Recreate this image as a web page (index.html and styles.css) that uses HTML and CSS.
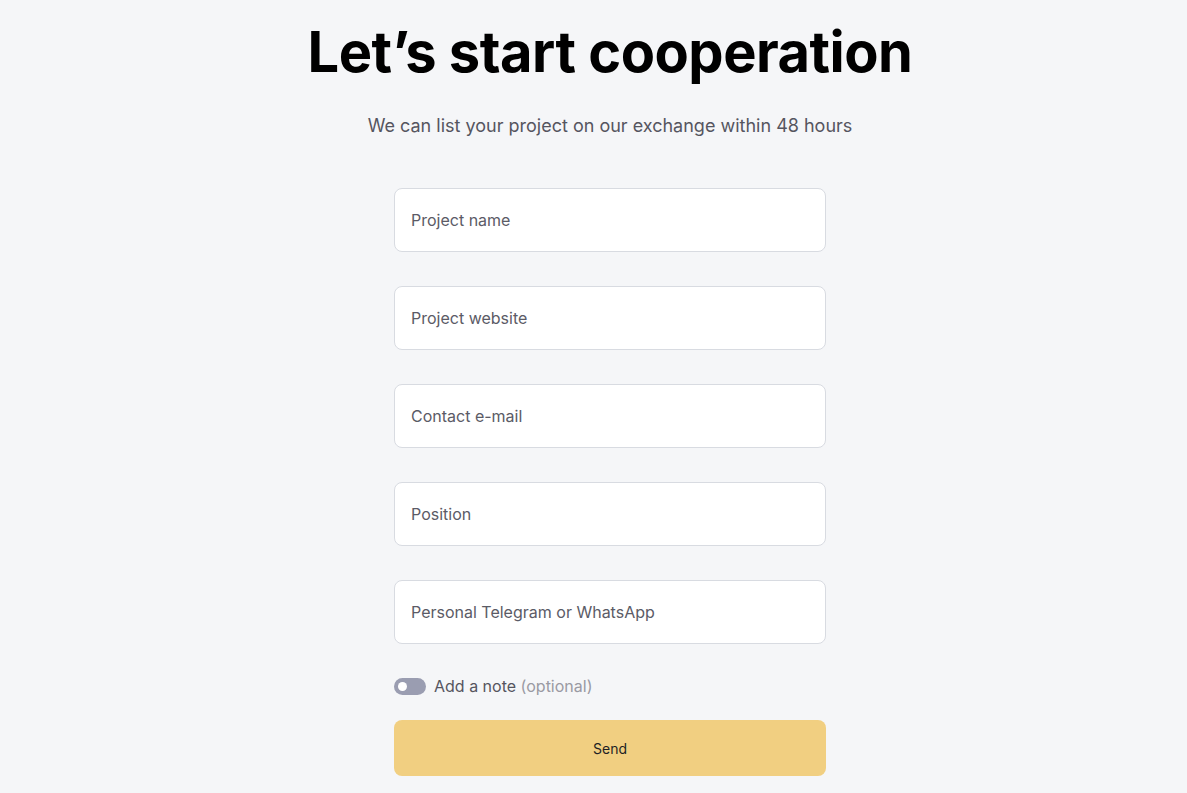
FILE: index.html
```html
<!doctype html>
<html lang="en">
  <head>
    <meta charset="UTF-8" />
    <meta name="viewport" content="width=device-width, initial-scale=1.0" />
    <title>Let's start cooperation</title>
    <link rel="stylesheet" href="styles.css">
  </head>
  <body>
    <section class="coop">
      <h1 class="coop-title">Let’s start cooperation</h1>
      <p class="coop-subtitle">We can list your project on our exchange within 48 hours</p>

      <form class="coop-form">
        <input class="field" type="text" placeholder="Project name" />
        <input class="field" type="text" placeholder="Project website" />
        <input class="field" type="email" placeholder="Contact e-mail" />
        <input class="field" type="text" placeholder="Position" />
        <input class="field" type="text" placeholder="Personal Telegram or WhatsApp" />

        <label class="note-toggle">
          <span class="switch"><span class="switch-knob"></span></span>
          <span>Add a note <span class="optional">(optional)</span></span>
        </label>

        <button class="send-btn" type="button">Send</button>
      </form>
    </section>
  </body>
</html>
```

FILE: styles.css
```css
body {
  margin: 0;
  padding: 0;
  font-family: 'Inter', 'Noto Sans', sans-serif;
  background: #f5f6f8;
  color: #000;
}

.coop {
  display: flex;
  flex-direction: column;
  align-items: center;
  padding-top: 19px;
  padding-left: 33px;
}

.coop-title {
  margin: 0;
  font-size: 56px;
  font-weight: 700;
  line-height: 66px;
  letter-spacing: -0.5px;
}

.coop-subtitle {
  margin: 29px 0 0 0;
  font-size: 18px;
  line-height: 24px;
  color: #55555f;
}

.coop-form {
  width: 432px;
  margin-top: 50px;
  display: flex;
  flex-direction: column;
}

.field {
  box-sizing: border-box;
  height: 64px;
  margin-bottom: 34px;
  padding: 0 16px;
  border: 1px solid #d8dbe1;
  border-radius: 8px;
  background: #fff;
  font-family: inherit;
  font-size: 16px;
  color: #222;
  outline: none;
}

.field::placeholder {
  color: #5b5b66;
}

.note-toggle {
  display: flex;
  align-items: center;
  margin-top: -2px;
  font-size: 16px;
  line-height: 20px;
  color: #55555f;
  cursor: pointer;
}

.switch {
  position: relative;
  width: 32px;
  height: 17px;
  border-radius: 9px;
  background: #9a9db1;
  margin-right: 8px;
}

.switch-knob {
  position: absolute;
  top: 4px;
  left: 4px;
  width: 9px;
  height: 9px;
  border-radius: 50%;
  background: #fff;
}

.optional {
  color: #9a9aa3;
}

.send-btn {
  margin-top: 24px;
  height: 56px;
  border: none;
  border-radius: 8px;
  background: #f1cf81;
  font-family: inherit;
  font-size: 14px;
  color: #1f1f24;
  cursor: pointer;
}
```
